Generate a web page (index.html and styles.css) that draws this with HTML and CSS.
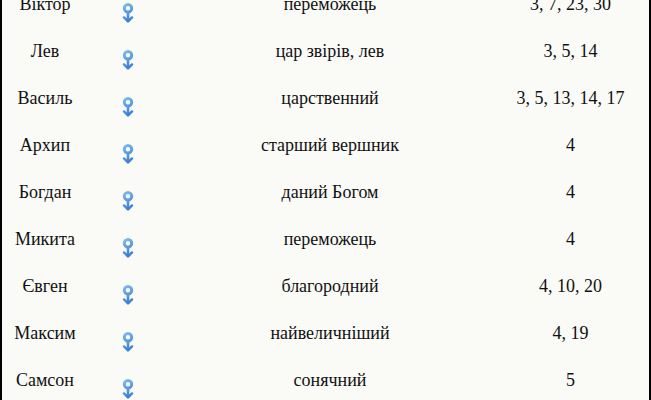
FILE: index.html
```html
<!DOCTYPE html>
<html lang="uk">
<head>
<meta charset="utf-8">
<link rel="stylesheet" href="styles.css">
</head>
<body>
<svg width="0" height="0" class="defs" aria-hidden="true">
  <defs>
    <linearGradient id="g" gradientUnits="userSpaceOnUse" x1="0" y1="0" x2="12" y2="20">
      <stop offset="0" stop-color="#86c2f2"/>
      <stop offset="1" stop-color="#2a6fcc"/>
    </linearGradient>
    <symbol id="ico" viewBox="0 0 12 20">
      <circle cx="6" cy="5.2" r="3.7" fill="#ffffff" stroke="url(#g)" stroke-width="3"/>
      <path d="M6 8.5 V18.4" stroke="url(#g)" stroke-width="2.6" fill="none"/>
      <path d="M2 14.4 L6 18.4 L10 14.4" stroke="url(#g)" stroke-width="2.4" fill="none" stroke-linejoin="round" stroke-linecap="round"/>
    </symbol>
  </defs>
</svg>
<div class="table">
  <div class="row"><div class="c name">Віктор</div><div class="c icon"><svg class="i"><use href="#ico"/></svg></div><div class="c mean">переможець</div><div class="c num">3, 7, 23, 30</div></div>
  <div class="row"><div class="c name">Лев</div><div class="c icon"><svg class="i"><use href="#ico"/></svg></div><div class="c mean">цар звірів, лев</div><div class="c num">3, 5, 14</div></div>
  <div class="row"><div class="c name">Василь</div><div class="c icon"><svg class="i"><use href="#ico"/></svg></div><div class="c mean">царственний</div><div class="c num">3, 5, 13, 14, 17</div></div>
  <div class="row"><div class="c name">Архип</div><div class="c icon"><svg class="i"><use href="#ico"/></svg></div><div class="c mean">старший вершник</div><div class="c num">4</div></div>
  <div class="row"><div class="c name">Богдан</div><div class="c icon"><svg class="i"><use href="#ico"/></svg></div><div class="c mean">даний Богом</div><div class="c num">4</div></div>
  <div class="row"><div class="c name">Микита</div><div class="c icon"><svg class="i"><use href="#ico"/></svg></div><div class="c mean">переможець</div><div class="c num">4</div></div>
  <div class="row"><div class="c name">Євген</div><div class="c icon"><svg class="i"><use href="#ico"/></svg></div><div class="c mean">благородний</div><div class="c num">4, 10, 20</div></div>
  <div class="row"><div class="c name">Максим</div><div class="c icon"><svg class="i"><use href="#ico"/></svg></div><div class="c mean">найвеличніший</div><div class="c num">4, 19</div></div>
  <div class="row"><div class="c name">Самсон</div><div class="c icon"><svg class="i"><use href="#ico"/></svg></div><div class="c mean">сонячний</div><div class="c num">5</div></div>
</div>
</body>
</html>
```
FILE: styles.css
```css
html, body {
  margin: 0;
  padding: 0;
  background: #fafaf7;
  overflow: hidden;
}
.defs {
  position: absolute;
}
.table {
  width: 651px;
  box-sizing: border-box;
  border-left: 2px solid #000;
  border-right: 2px solid #000;
  margin-top: -16px;
  font-family: "Liberation Serif", "Times New Roman", serif;
  font-size: 18px;
  color: #111;
}
.row {
  display: grid;
  grid-template-columns: 86px 80px 324px 1fr;
  height: 47px;
}
.c {
  padding-top: 10px;
  line-height: 20px;
  text-align: center;
  white-space: nowrap;
}
.icon {
  padding-top: 19px;
  display: flex;
  justify-content: center;
}
.i {
  width: 12px;
  height: 20px;
  display: block;
}
```
